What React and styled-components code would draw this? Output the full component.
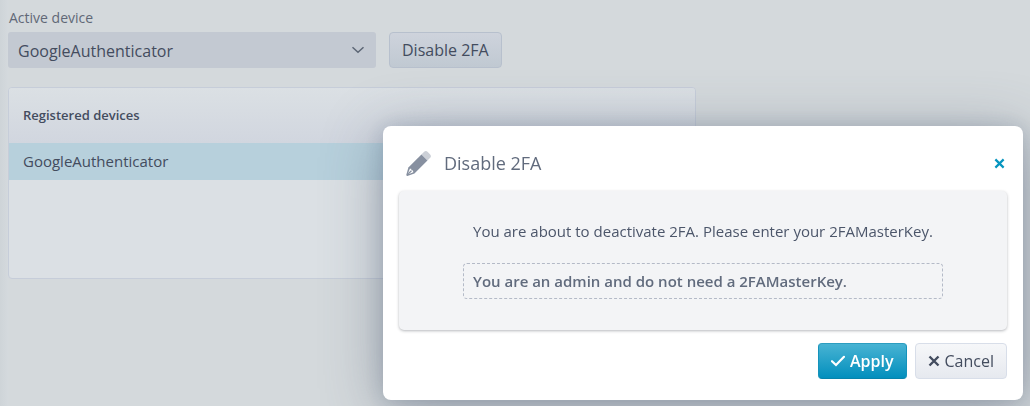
import React from "react";
import styled, { createGlobalStyle } from "styled-components";

const GlobalStyle = createGlobalStyle`
  * {
    box-sizing: border-box;
  }

  body {
    margin: 0;
    min-height: 100vh;
    background: linear-gradient(90deg, #ced4d8 0, #d4d9dd 8px, #d4d9dc 9px);
    color: #434c5e;
    font-family: "Segoe UI", "Open Sans", "Noto Sans", sans-serif;
    font-size: 15px;
    line-height: 20px;
  }

  button,
  select {
    font: inherit;
    color: inherit;
  }
`;

const Page = styled.main`
  max-width: 704px;
  padding: 8px;
`;

const Label = styled.label`
  display: block;
  margin-bottom: 4px;
  padding-left: 1px;
  color: #616877;
  font-size: 14px;
  font-weight: 500;
`;

const Toolbar = styled.div`
  display: flex;
  gap: 13px;
  margin-bottom: 19px;
`;

const SelectWrap = styled.div`
  display: grid;
  align-items: center;
  flex: 0 1 368px;

  > * {
    grid-area: 1 / 1;
  }

  svg {
    justify-self: end;
    margin-right: 11px;
    pointer-events: none;
  }
`;

const Select = styled.select`
  appearance: none;
  width: 100%;
  height: 36px;
  padding: 2px 32px 0 10px;
  border: 0;
  border-radius: 3px;
  background: #c3c9d2;
  font-size: 16px;
  font-weight: 500;
`;

const Button = styled.button`
  display: flex;
  align-items: center;
  justify-content: center;
  gap: 5px;
  height: 36px;
  padding: 0 12px;
  border: 1px solid #d8dee9;
  border-radius: 4px;
  background: linear-gradient(#f6f7f9, #e6e9ef);
  font-size: 16px;
  font-weight: 500;
  white-space: nowrap;
  cursor: pointer;
`;

const DimButton = styled(Button)`
  border-color: #b7c0cd;
  background: linear-gradient(#ced3dc, #c0c9d2);
`;

const PrimaryButton = styled(Button)`
  border-color: #2c9dc0 #1593bb #0783ab;
  background: linear-gradient(#48b3d3, #028fbd);
  color: #fff;
  font-weight: 600;
`;

const TableFrame = styled.div`
  min-height: 192px;
  overflow: hidden;
  border: 1px solid #c6cdd9;
  border-radius: 4px;
  background: #dbe0e4;
`;

const Table = styled.table`
  width: 100%;
  border-collapse: collapse;
  text-align: left;

  thead {
    background: linear-gradient(#dbe0e4, #d1d6df);
  }

  th {
    height: 55px;
    padding: 0 14px 2px;
    font-size: 13px;
    font-weight: 600;
  }

  td {
    height: 37px;
    padding: 0 14px 2px;
    background: #b7d0dc;
  }
`;

const Overlay = styled.div`
  position: fixed;
  inset: 0;
  display: flex;
  align-items: flex-end;
  justify-content: flex-end;
  padding: 6px 7px;
`;

const Dialog = styled.section`
  width: 100%;
  max-width: 640px;
  padding: 0 16px 21px;
  border-radius: 8px;
  background: #fff;
  box-shadow: 0 10px 60px rgba(76, 86, 106, 0.45), 0 2px 20px rgba(59, 83, 112, 0.22);
`;

const DialogHeader = styled.header`
  display: flex;
  align-items: center;
  gap: 13px;
  height: 65px;
  padding: 9px 0 0 7px;

  h2 {
    flex: 1;
    margin: 0;
    color: #616b7d;
    font-size: 18px;
    font-weight: 500;
  }
`;

const CloseButton = styled.button`
  display: flex;
  padding: 2px;
  border: 0;
  background: none;
  color: #0795bf;
  cursor: pointer;
`;

const DialogBody = styled.div`
  display: flex;
  justify-content: center;
  padding: 30px 16px 31px;
  border-radius: 5px;
  background: #f3f4f6;
  box-shadow: 0 1px 3px rgba(46, 52, 64, 0.35);
`;

const Message = styled.div`
  flex: 0 1 480px;

  p {
    margin: 0 0 22px;
    padding: 0 10px;
    color: #4c566a;
  }
`;

const Notice = styled.div`
  padding: 8px 9px;
  border: 1px dashed #b4bac7;
  border-radius: 4px;
  color: #616b7d;
  font-weight: 600;
  line-height: 18px;
`;

const DialogFooter = styled.footer`
  display: flex;
  justify-content: flex-end;
  gap: 8px;
  padding-top: 13px;
`;

const Cross = ({ size = 12, weight = 2.4 }) => (
  <svg width={size} height={size} viewBox="0 0 12 12" aria-hidden="true">
    <path d="M1.5 1.5 10.5 10.5M10.5 1.5 1.5 10.5" stroke="currentColor" strokeWidth={weight} />
  </svg>
);

const Check = () => (
  <svg width="14" height="12" viewBox="0 0 14 12" fill="none" aria-hidden="true">
    <path d="M1 6.2 5 10 13 1.8" stroke="currentColor" strokeWidth="2.2" strokeLinecap="round" />
  </svg>
);

const Chevron = () => (
  <svg width="14" height="8" viewBox="0 0 14 8" fill="none" aria-hidden="true">
    <path d="M1.5 1.2 7 6.3 12.5 1.2" stroke="#5c6675" strokeWidth="1.5" />
  </svg>
);

const Pencil = () => (
  <svg width="25" height="25" viewBox="0 0 24 24" aria-hidden="true">
    <path
      fill="#ccd0d7"
      d="M14.8 3.4 17.2 1a2.6 2.6 0 0 1 3.7 0L23 3.1a2.6 2.6 0 0 1 0 3.7l-2.4 2.4z"
    />
    <path
      fill="#8790a0"
      d="M14.8 3.4 20.6 9.2 8.1 21.7 1.3 23.9Q.1 24.1.3 22.8L2.3 15.9z"
    />
    <path
      d="M3.7 17.1 2.1 21.2 2.9 22 7 20.4 6.7 18.6 5.2 18.4 5 17.1z"
      fill="#fff"
    />
    <path d="M2.3 21.8 5.2 18.9" stroke="#8790a0" strokeWidth="1.2" />
  </svg>
);

const App = () => {
  return (
    <>
      <GlobalStyle />
      <Page>
        <Label htmlFor="device">Active device</Label>
        <Toolbar>
          <SelectWrap>
            <Select id="device">
              <option>GoogleAuthenticator</option>
            </Select>
            <Chevron />
          </SelectWrap>
          <DimButton type="button">Disable 2FA</DimButton>
        </Toolbar>
        <TableFrame>
          <Table>
            <thead>
              <tr>
                <th scope="col">Registered devices</th>
              </tr>
            </thead>
            <tbody>
              <tr>
                <td>GoogleAuthenticator</td>
              </tr>
            </tbody>
          </Table>
        </TableFrame>
      </Page>

      <Overlay>
        <Dialog role="dialog" aria-modal="true" aria-labelledby="dialog-title">
          <DialogHeader>
            <Pencil />
            <h2 id="dialog-title">Disable 2FA</h2>
            <CloseButton type="button" aria-label="Close">
              <Cross size={11} />
            </CloseButton>
          </DialogHeader>
          <DialogBody>
            <Message>
              <p>You are about to deactivate 2FA. Please enter your 2FAMasterKey.</p>
              <Notice>You are an admin and do not need a 2FAMasterKey.</Notice>
            </Message>
          </DialogBody>
          <DialogFooter>
            <PrimaryButton type="button">
              <Check />
              Apply
            </PrimaryButton>
            <Button type="button">
              <Cross />
              Cancel
            </Button>
          </DialogFooter>
        </Dialog>
      </Overlay>
    </>
  );
};

export default App;
